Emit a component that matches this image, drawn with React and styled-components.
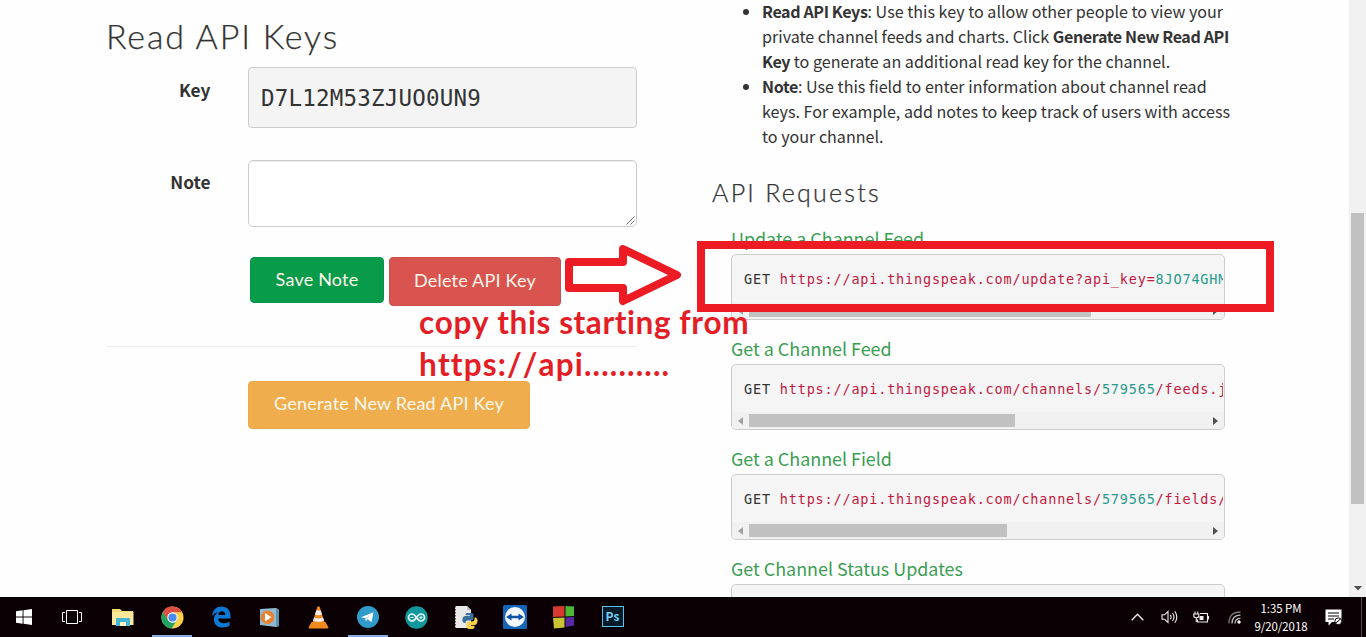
import React from 'react';
import styled, { createGlobalStyle } from 'styled-components';

const sans = '"Noto Sans CJK SC", "Noto Sans", sans-serif';
const display = 'Lato, sans-serif';
const mono = '"DejaVu Sans Mono", monospace';

const Global = createGlobalStyle`
  * { box-sizing: border-box; }
  body { margin: 0; background: #fff; overflow: hidden; }
`;

const Screen = styled.div`
  position: relative;
  display: flex;
  flex-direction: column;
  width: 1366px;
  height: 637px;
  overflow: hidden;
  color: #333;
  font-family: ${sans};
`;
const Viewport = styled.div`
  display: flex;
  height: 597px;
  overflow: hidden;
  background: #fefefe;
`;
const KeysColumn = styled.main`
  width: 637px;
  padding: 13px 0 0 106px;
`;
const PageTitle = styled.h1`
  margin: 0 0 8px;
  font: 300 34px/46px ${display};
  letter-spacing: 1.8px;
  -webkit-text-stroke: 0.25px #333;
  white-space: nowrap;
`;
const Field = styled.div`
  display: flex;
  height: ${(p) => p.$height}px;
  margin-bottom: ${(p) => p.$gap}px;
`;
const Label = styled.label`
  width: 104.5px;
  margin-right: 37.5px;
  padding-top: ${(p) => p.$top}px;
  text-align: right;
  font-weight: 600;
  font-size: 17.3px;
  line-height: 26px;
`;
const KeyBox = styled.div`
  flex: 1;
  padding: 0 12px;
  border: 1px solid #ccc;
  border-radius: 4px;
  background: #f4f4f4;
  font: 22.5px/60px ${mono};
  letter-spacing: 0.2px;
`;
const NoteBox = styled.div`
  flex: 1;
  display: flex;
  align-items: flex-end;
  justify-content: flex-end;
  padding: 1px;
  border: 1px solid #ccc;
  border-radius: 5px;
  background: #fff;
  box-shadow: inset 0 1px 1px rgba(0, 0, 0, 0.08);
`;
const Buttons = styled.div`
  display: flex;
  align-items: flex-start;
  gap: 5px;
  height: 89px;
  padding-left: 144px;
`;
const Button = styled.button`
  display: block;
  width: ${(p) => p.$w}px;
  height: ${(p) => p.$h}px;
  margin: 0;
  padding: 0 0 ${(p) => p.$lift || 2}px;
  border: 1px solid ${(p) => p.$edge};
  border-radius: 4px;
  background: ${(p) => p.$bg};
  color: #fff8ec;
  font: 400 18px/1 ${display};
  letter-spacing: 0.2px;
  white-space: nowrap;
`;
const Rule = styled.hr`
  height: 1px;
  margin: 0 0 34px;
  border: 0;
  background: #eee;
`;
const GenerateRow = styled.div`
  padding-left: 142px;
`;

const HelpColumn = styled.aside`
  width: 712px;
  padding-left: 75px;
`;
const List = styled.ul`
  margin: -1px 0 0;
  padding-left: 50px;
  font-size: 16.1px;
  line-height: 25px;
  white-space: nowrap;

  b {
    letter-spacing: -0.4px;
  }
`;
const SubTitle = styled.h2`
  margin: 27px 0 21px;
  font: 300 25px/32px ${display};
  letter-spacing: 2.25px;
  -webkit-text-stroke: 0.25px #333;
`;
const Request = styled.section`
  width: 494px;
  height: 110px;
  margin-left: 19px;
`;
const RequestTitle = styled.h3`
  height: 25px;
  margin: 0;
  color: #3a9d52;
  font-weight: 400;
  font-size: 17.9px;
  line-height: 18px;
  white-space: nowrap;
`;
const Code = styled.div`
  display: flex;
  flex-direction: column;
  height: 66px;
  border: 1px solid #ccc;
  border-radius: 5px;
  background: #f5f5f5;
  overflow: hidden;
`;
const CodeLine = styled.div`
  height: 47px;
  margin-right: 1px;
  padding-left: 12px;
  overflow: hidden;
  white-space: pre;
  font: 13.5px/49px ${mono};
  letter-spacing: 0.82px;
`;
const Url = styled.span`
  color: #c2183f;
`;
const Num = styled.span`
  color: #269a8c;
`;
const Scroll = styled.div`
  display: flex;
  align-items: center;
  height: 17px;
  padding: 0 6px;
  background: #f1f1f1;
`;
const Thumb = styled.div`
  width: ${(p) => p.$w}px;
  height: 13px;
  margin: 0 auto 0 6px;
  background: #c1c1c1;
`;
const PageScroll = styled.div`
  display: flex;
  flex-direction: column;
  align-items: center;
  justify-content: space-between;
  width: 17px;
  padding: 213px 0 6px;
  background: #f1f1f1;
`;
const PageThumb = styled.div`
  width: 13px;
  height: 291px;
  background: #c1c1c1;
`;

const Highlight = styled.div`
  position: absolute;
  left: 697px;
  top: 241px;
  width: 577px;
  height: 71px;
  border: 8px solid #ed1c24;
`;
const ArrowMark = styled.svg`
  position: absolute;
  left: 560px;
  top: 240px;
`;
const Remark = styled.div`
  position: absolute;
  left: 419px;
  top: 301px;
  color: #e31e26;
  font: 700 31.5px/42px ${display};
  font-variant-ligatures: none;
  white-space: nowrap;
`;
const RemarkLine = styled.span`
  display: block;
  font-kerning: none;
  letter-spacing: ${(p) => p.$ls}px;
`;

const Taskbar = styled.footer`
  display: flex;
  height: 40px;
  background: #0b0104;
  color: #fff;
`;
const Task = styled.div`
  display: flex;
  align-items: center;
  justify-content: center;
  width: ${(p) => p.$w || 49}px;
`;
const Running = styled(Task)`
  background: linear-gradient(#84ade6, #84ade6) center bottom / 40px 2px no-repeat;
`;
const Tray = styled.div`
  display: flex;
  align-items: center;
  margin-left: auto;
  padding-right: 4px;
`;
const TrayIcon = styled.div`
  display: flex;
  align-items: center;
  width: ${(p) => p.$w}px;
`;
const Clock = styled.div`
  width: 56px;
  margin-right: 16px;
  text-align: center;
  font: 11.4px/18px ${sans};
  white-space: nowrap;
`;
const ShowDesktop = styled.div`
  width: 1px;
  height: 40px;
  margin-left: 19px;
  background: #55494c;
`;

const Tri = ({ d, fill, w = 5, h = 8 }) => (
  <svg width={w} height={h} viewBox={`0 0 ${w} ${h}`}><path d={d} fill={fill} /></svg>
);

const requests = [
  { title: 'Update a Channel Feed', a: 'https://api.thingspeak.com/update?api_key=', n: '8JO74GHM', b: '', w: 342 },
  { title: 'Get a Channel Feed', a: 'https://api.thingspeak.com/channels/', n: '579565', b: '/feeds.j', w: 266 },
  { title: 'Get a Channel Field', a: 'https://api.thingspeak.com/channels/', n: '579565', b: '/fields/', w: 258 },
  { title: 'Get Channel Status Updates', w: 258 },
];

const Windows = () => (
  <svg width="16" height="16" viewBox="0 0 16 16" fill="#fff">
    <path d="M0 2.3 6.6 1.3V7.5H0zM7.5 1.2 16 0V7.5H7.5zM0 8.5H6.6V14.7L0 13.7zM7.5 8.5H16V16L7.5 14.8z" />
  </svg>
);
const TaskView = () => (
  <svg width="20" height="14" viewBox="0 0 20 14" fill="none" stroke="#fff">
    <path d="M4.5.5h11v13h-11zM3 2.5H.5v9H3M17 2.5h2.5v9H17" />
  </svg>
);
const Explorer = () => (
  <svg width="22" height="19" viewBox="0 0 22 19">
    <path d="M0 1h8l2 2h11v14H0z" fill="#f3d978" />
    <path d="M0 4h21.500v13H0z" fill="#fbe79c" />
    <path d="M4 18v-7q0-1 1-1h12q1 0 1 1v7h-4v-4H8v4z" fill="#45b5d6" />
    <path d="M8 14h6v4H8z" fill="#fff3c2" />
  </svg>
);
const Chrome = () => (
  <svg width="23" height="23" viewBox="0 0 24 24">
    <circle cx="12" cy="12" r="11.500" fill="#ffd24a" />
    <path d="M2 6.300A11.500 11.500 0 0 1 22 6.500H12L7 15z" fill="#dd4f43" />
    <path d="M2 6.300A11.500 11.500 0 0 0 11 23.500L16.700 14.500 12 17 7 14.600z" fill="#1fa463" />
    <circle cx="12" cy="12" r="5.400" fill="#fff" />
    <circle cx="12" cy="12" r="4.300" fill="#4b8bf4" />
  </svg>
);
const Edge = () => (
  <svg width="20" height="22" viewBox="0 0 21 22">
    <path d="M1 10C2 3 6 0 11 0c6 0 9.500 4 9.500 9.500V12.500H7.500c.3 3.500 3.300 5 6.500 5 2 0 4-.6 5.500-1.500v4.300C17.500 21.500 15 22 12.500 22 6.500 22 3 18.500 3 13.500c0-3.500 2-6 4.800-7.500C4.500 6.500 2.500 8 1 10zM7.800 8.800H15C15 6.300 13.700 5 11.500 5S8 6.500 7.800 8.800z" fill="#0b78d4" />
  </svg>
);
const Player = () => (
  <svg width="21" height="21" viewBox="0 0 21 21">
    <path d="M1 2 17 1 20 3V19L17 20 1 18z" fill="#8fbad0" />
    <path d="M17 1 20 3V19L17 20z" fill="#5e93b0" />
    <circle cx="8.500" cy="10.300" r="6.800" fill="#ea8131" />
    <path d="M6 6 12.500 10.300 6 14.500z" fill="#fff" />
  </svg>
);
const Vlc = () => (
  <svg width="21" height="23" viewBox="0 0 21 23">
    <path d="M3.500 16h14L20.500 21.500Q20.500 22.500 19 22.500H2Q.500 22.500.500 21.500z" fill="#f08a1d" />
    <path d="M9.500.500h2L17 18q-6.500 3-13 0z" fill="#f18a20" />
    <path d="M8.300 4.500h4.400L14 8.500q-3.500 1.500-7 0zM6 11.500q4.500 2 9 0l1 3.300q-5.500 2.200-11 0z" fill="#eee" />
  </svg>
);
const Telegram = () => (
  <svg width="22" height="22" viewBox="0 0 22 22">
    <circle cx="11" cy="11" r="11" fill="#2f9ccc" />
    <path d="M4 11.200 16.500 6.200 14.500 16.200 10.700 13.300 8.800 15.200 8.400 12.300z" fill="#fff" />
    <path d="M8.400 12.300 14.500 8 10 12.800 8.800 15.200z" fill="#b9d9ea" />
  </svg>
);
const Arduino = () => (
  <svg width="23" height="23" viewBox="0 0 23 23">
    <circle cx="11.500" cy="11.500" r="11.200" fill="#12989c" />
    <path d="M11.500 11.500C9.500 8.500 8.500 8 7 8a3.500 3.500 0 0 0 0 7c1.500 0 2.500-.5 4.500-3.500S14.500 8 16 8a3.500 3.500 0 0 1 0 7c-1.500 0-2.500-.5-4.500-3.500z" fill="none" stroke="#e6f6f6" strokeWidth="1.700" />
    <path d="M5.500 11.500h3M14.500 11.500h3M16 10v3" stroke="#e6f6f6" />
  </svg>
);
const Python = () => (
  <svg width="24" height="24" viewBox="0 0 24 24">
    <path d="M1 1h12l4 4v18H1z" fill="#e9e9e9" />
    <path d="M13 1v4h4z" fill="#bbb" />
    <path d="M1.500 1v22" stroke="#555" strokeDasharray="1.500 1.500" />
    <path d="M13 8h4.500q2 0 2 2v3.500q0 2-2 2H13q-1.500 0-1.500 2.500H10q-2-1-1.500-4.500Q9 11 11 11h5v-.700h-4.500V9.500Q11.500 8 13 8z" fill="#3a6fa0" />
    <path d="M20.500 12.500h1.500q2 1.500 1.300 5Q22.500 20 20.500 20h-4v.700h4V22q0 2-3.500 2-4.500 0-4.500-2v-3.500q0-2 2-2H18q2.500 0 2.500-2z" fill="#fad24e" />
  </svg>
);
const TeamViewer = () => (
  <svg width="24" height="24" viewBox="0 0 24 24">
    <rect width="24" height="24" rx="1.500" fill="#1565b8" />
    <circle cx="12" cy="12" r="10" fill="#f4f8fd" />
    <path d="M3 12 8.500 8.500V10.800h7V8.500L21 12 15.500 15.500V13.200h-7v2.300z" fill="#0d53a3" />
  </svg>
);
const Blocks = () => (
  <svg width="22" height="24" viewBox="0 0 22 24">
    <path d="M0 1.500 11.500 1V11.500L0 12z" fill="#d83a33" />
    <path d="M12.500 1 21 1.500V11L12.500 11.500z" fill="#4cb733" />
    <path d="M0 13 11.500 12.500V22.500L1 23.500z" fill="#c9c431" />
    <path d="M12.500 12.500 21 12V20.500L12.500 22z" fill="#5929a5" />
  </svg>
);
const PsFrame = styled.div`
  width: 22px;
  height: 21px;
  margin-bottom: 2px;
  border: 1.500px solid #5cc3ef;
  background: #071b29;
  color: #6fd0f7;
  font: 700 12px/18px ${sans};
  text-align: center;
`;

const Up = () => (
  <svg width="13" height="8" viewBox="0 0 13 8" fill="none" stroke="#eee" strokeWidth="1.300"><path d="M.7 7.300 6.500 1.300 12.300 7.300" /></svg>
);
const Speaker = () => (
  <svg width="18" height="14" viewBox="0 0 18 14" fill="none" stroke="#eee" strokeWidth="1.100">
    <path d="M1 4.800h2.500L7 1.500v11L3.500 9.200H1zM9.300 4.800q1.700 2.200 0 4.400M11.500 3q3 4 0 8M13.800 1.200q4 5.800 0 11.600" />
  </svg>
);
const Battery = () => (
  <svg width="17" height="13" viewBox="0 0 17 13" fill="none" stroke="#eee" strokeWidth="1.100">
    <path d="M7 2.500h7.500v8.500H4.500V8.500M15.500 5v3.500M2 .5v2.500M4.800.5v2.500M.800 3h5v2q0 1.700-2.500 1.700T.800 5zM3.300 7v4" />
    <path d="M6.500 5h4v4h-4z" fill="#eee" stroke="none" />
  </svg>
);
const Wifi = () => (
  <svg width="13" height="13" viewBox="0 0 13 13" fill="none" strokeWidth="1.300">
    <path d="M1 12.500Q1 1 12.500 1" stroke="#777" />
    <path d="M4 12.500Q4 4.200 12.500 4.200M7 12.500Q7 7.300 12.500 7.300" stroke="#bbb" />
    <circle cx="11" cy="11" r="1.700" fill="#fff" />
  </svg>
);
const Notice = () => (
  <svg width="17" height="17" viewBox="0 0 17 17">
    <path d="M.500.500h16v12.500H7L3.500 16.500V13H.500z" fill="#fff" />
    <path d="M3 4h11M3 7h11M3 10h6" stroke="#0b0104" strokeWidth="1.200" />
    <circle cx="13.300" cy="12.300" r="3.400" fill="#fff" stroke="#0b0104" />
    <path d="M10.800 14 15.500 10" stroke="#0b0104" />
  </svg>
);

export default function App() {
  return (
    <Screen>
      <Global />
      <Viewport>
        <KeysColumn>
          <PageTitle>Read API Keys</PageTitle>
          <Field $height={61} $gap={32}>
            <Label $top={10}>Key</Label>
            <KeyBox>D7L12M53ZJUO0UN9</KeyBox>
          </Field>
          <Field $height={67} $gap={30}>
            <Label $top={9}>Note</Label>
            <NoteBox>
              <svg width="9" height="9" viewBox="0 0 9 9" stroke="#666" strokeWidth=".9"><path d="M.500 8.500 8.500.500M4.500 8.500 8.500 4.500" /></svg>
            </NoteBox>
          </Field>
          <Buttons>
            <Button $w={134} $h={46} $bg="#089b49" $edge="#08934a">Save Note</Button>
            <Button $w={172} $h={49} $lift={4} $bg="#d9534f" $edge="#c9504d">Delete API Key</Button>
          </Buttons>
          <Rule />
          <GenerateRow>
            <Button $w={282} $h={48} $lift={4} $bg="#f0ad4e" $edge="#eba94c">Generate New Read API Key</Button>
          </GenerateRow>
        </KeysColumn>
        <HelpColumn>
          <List>
            <li><b>Read API Keys</b>: Use this key to allow other people to view your<br />private channel feeds and charts. Click <b>Generate New Read API<br />Key</b> to generate an additional read key for the channel.</li>
            <li><b>Note</b>: Use this field to enter information about channel read<br />keys. For example, add notes to keep track of users with access<br />to your channel.</li>
          </List>
          <SubTitle>API Requests</SubTitle>
          {requests.map((r) => (
            <Request key={r.title}>
              <RequestTitle>{r.title}</RequestTitle>
              <Code>
                <CodeLine>{r.a && <>GET <Url>{r.a}<Num>{r.n}</Num>{r.b}</Url></>}</CodeLine>
                <Scroll>
                  <Tri d="M5 0V8L0 4z" fill="#a3a3a3" />
                  <Thumb $w={r.w} />
                  <Tri d="M0 0V8L5 4z" fill="#505050" />
                </Scroll>
              </Code>
            </Request>
          ))}
        </HelpColumn>
        <PageScroll>
          <PageThumb />
          <Tri w={8} h={5} d="M0 0H8L4 4.500z" fill="#505050" />
        </PageScroll>
      </Viewport>
      <Taskbar>
        <Task $w={48}><Windows /></Task>
        <Task $w={48}><TaskView /></Task>
        <Task $w={53}><Explorer /></Task>
        <Running $w={46}><Chrome /></Running>
        <Task $w={52}><Edge /></Task>
        <Task $w={45}><Player /></Task>
        <Task $w={53}><Vlc /></Task>
        <Running $w={46}><Telegram /></Running>
        <Task $w={51}><Arduino /></Task>
        <Task $w={48}><Python /></Task>
        <Task $w={50}><TeamViewer /></Task>
        <Task $w={48}><Blocks /></Task>
        <Task $w={49}><PsFrame>Ps</PsFrame></Task>
        <Tray>
          <TrayIcon $w={30}><Up /></TrayIcon>
          <TrayIcon $w={32}><Speaker /></TrayIcon>
          <TrayIcon $w={35}><Battery /></TrayIcon>
          <TrayIcon $w={25}><Wifi /></TrayIcon>
          <Clock>1:35 PM<br />9/20/2018</Clock>
          <Notice />
          <ShowDesktop />
        </Tray>
      </Taskbar>
      <ArrowMark width="124" height="70" viewBox="0 0 124 70">
        <path d="M9 22H63V9L117 35 63 61V48H9z" fill="#fff" stroke="#ed1c24" strokeWidth="8" strokeLinejoin="round" />
      </ArrowMark>
      <Highlight />
      <Remark>
        <RemarkLine $ls={0.57}>copy this starting from</RemarkLine>
        <RemarkLine $ls={1.15}>https://api..........</RemarkLine>
      </Remark>
    </Screen>
  );
}
